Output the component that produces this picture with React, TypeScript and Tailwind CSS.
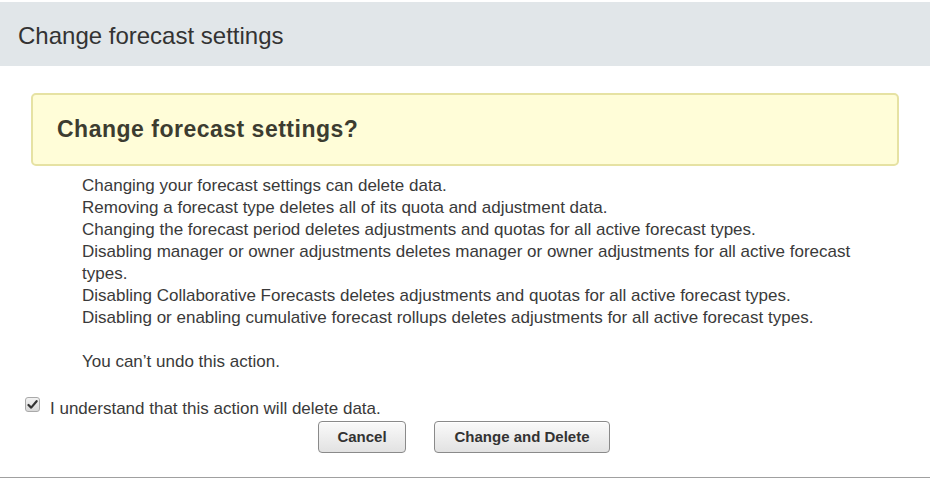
import React from 'react';

const lines: string[] = [
  'Changing your forecast settings can delete data.',
  'Removing a forecast type deletes all of its quota and adjustment data.',
  'Changing the forecast period deletes adjustments and quotas for all active forecast types.',
  'Disabling manager or owner adjustments deletes manager or owner adjustments for all active forecast types.',
  'Disabling Collaborative Forecasts deletes adjustments and quotas for all active forecast types.',
  'Disabling or enabling cumulative forecast rollups deletes adjustments for all active forecast types.',
];

const CheckBox: React.FC = () => (
  <span className="flex h-[15px] w-[15px] shrink-0 items-center justify-center rounded-[3px] border border-[#a9a9a9] bg-gradient-to-b from-[#f2f2f2] to-[#d8d8d8]">
    <svg width="11" height="11" viewBox="0 0 11 11">
      <path d="M1.5 6 L4.2 8.6 L9.6 2.2" fill="none" stroke="#333" strokeWidth="2.2" strokeLinecap="round" strokeLinejoin="round" />
    </svg>
  </span>
);

const Btn: React.FC<{ label: string; width: string }> = ({ label, width }) => (
  <button
    className={`${width} h-[32px] rounded-[4px] border border-[#8a8a8a] bg-gradient-to-b from-[#fafafa] to-[#e2e2e2] text-[15px] font-bold text-[#333] shadow-[inset_0_1px_0_#fff]`}
  >
    {label}
  </button>
);

export default function App() {
  return (
    <div className="h-[478px] w-[930px] overflow-hidden bg-white pt-[2px] font-['Liberation_Sans',Arial,sans-serif] text-[#333]">
      <div className="flex h-[64px] items-center bg-[#e1e6e9] pl-[18px]">
        <h1 className="pt-[4px] text-[24px] text-[#333]">Change forecast settings</h1>
      </div>

      <div className="px-[31px] pt-[27px]">
        <div className="flex h-[73px] items-center rounded-[5px] border-2 border-[#e6e2a3] bg-[#fffdd8] pl-[24px]">
          <h2 className="text-[23px] font-bold tracking-[0.5px] text-[#3c3c30]">Change forecast settings?</h2>
        </div>
      </div>

      <div className="pl-[82px] pr-[60px] pt-[9px] text-[17px] leading-[22px] text-[#3a3a3a]">
        {lines.map((line, i) => (
          <p key={i}>{line}</p>
        ))}
        <p className="mt-[22px]">You can’t undo this action.</p>
      </div>

      <label className="mt-[24px] flex items-start gap-[10px] pl-[25px] text-[17px] leading-[20px] text-[#3a3a3a]">
        <CheckBox />
        <span className="pt-[2px]">I understand that this action will delete data.</span>
      </label>

      <div className="mt-[2px] flex justify-center gap-[28px] pr-[2px]">
        <Btn label="Cancel" width="w-[88px]" />
        <Btn label="Change and Delete" width="w-[176px]" />
      </div>

      <div className="mt-[24px] h-[2px] bg-[#a0a0a0]" />
    </div>
  );
}
